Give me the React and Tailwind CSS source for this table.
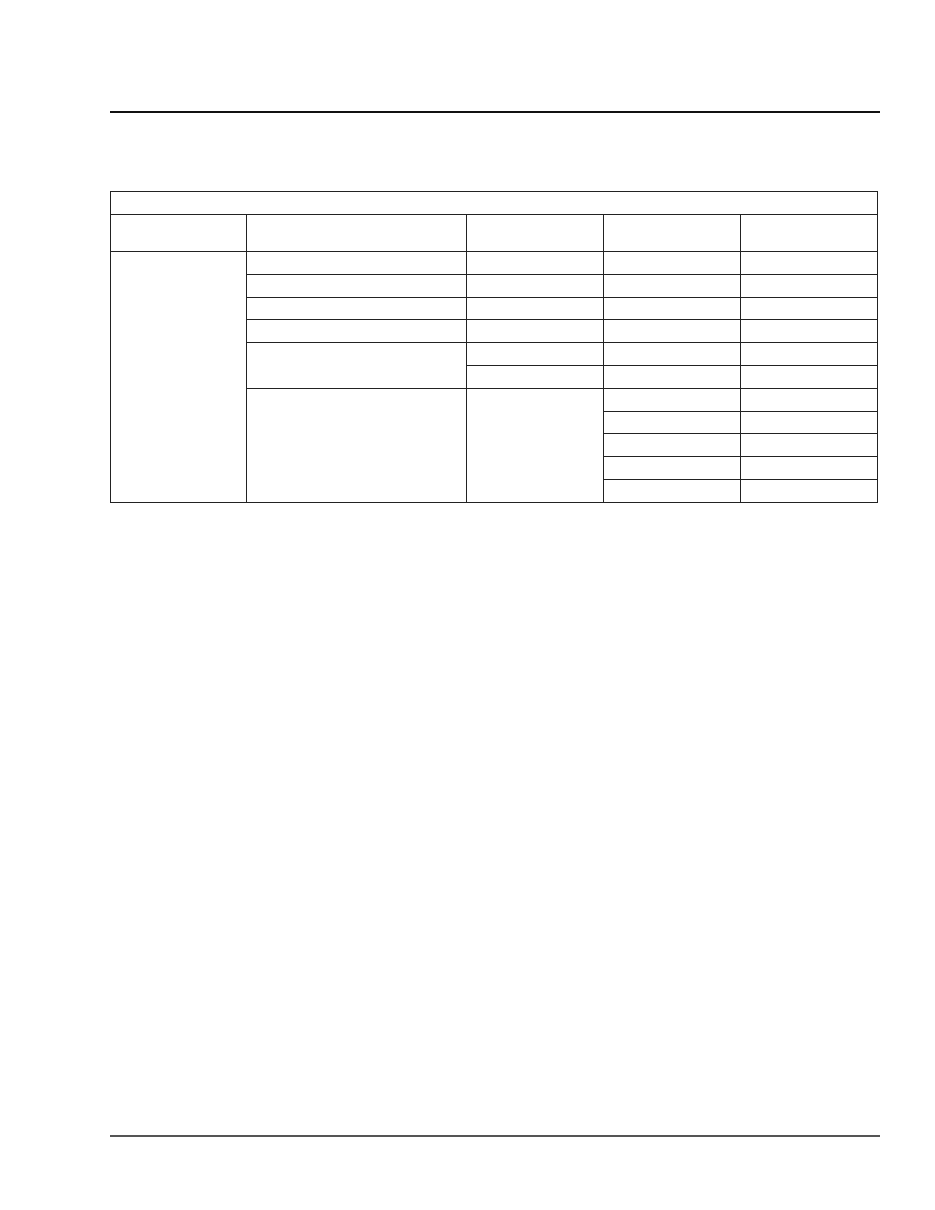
import React from "react";

const cell = "border border-[#222] p-0";

export default function App() {
  const rows = Array.from({ length: 11 });
  return (
    <div className="w-[935px] h-[1210px] bg-white relative" style={{ fontFamily: "'Liberation Sans', Arial, sans-serif" }}>
      <div className="pl-[110px] pt-[111px]">
        <div className="w-[770px] h-[2px] bg-[#111]" />
        <div className="h-[78px]" />
        <table className="table-fixed border-collapse w-[767px]">
          <colgroup>
            <col className="w-[136px]" />
            <col className="w-[220px]" />
            <col className="w-[137px]" />
            <col className="w-[137px]" />
            <col className="w-[137px]" />
          </colgroup>
          <tbody>
            <tr className="h-[23px]">
              <td className={cell} colSpan={5}></td>
            </tr>
            <tr className="h-[37px]">
              <td className={cell}></td>
              <td className={cell}></td>
              <td className={cell}></td>
              <td className={cell}></td>
              <td className={cell}></td>
            </tr>
            {rows.map((_, i) => (
              <tr key={i} className="h-[22.8px]">
                {i === 0 && <td className={cell} rowSpan={11}></td>}
                {i < 4 && <td className={cell}></td>}
                {i === 4 && <td className={cell} rowSpan={2}></td>}
                {i === 6 && <td className={cell} rowSpan={5}></td>}
                {i < 6 && <td className={cell}></td>}
                {i === 6 && <td className={cell} rowSpan={5}></td>}
                <td className={cell}></td>
                <td className={cell}></td>
              </tr>
            ))}
          </tbody>
        </table>
        <div className="h-[632px]" />
        <div className="w-[770px] h-[2px] bg-[#555]" />
      </div>
    </div>
  );
}
